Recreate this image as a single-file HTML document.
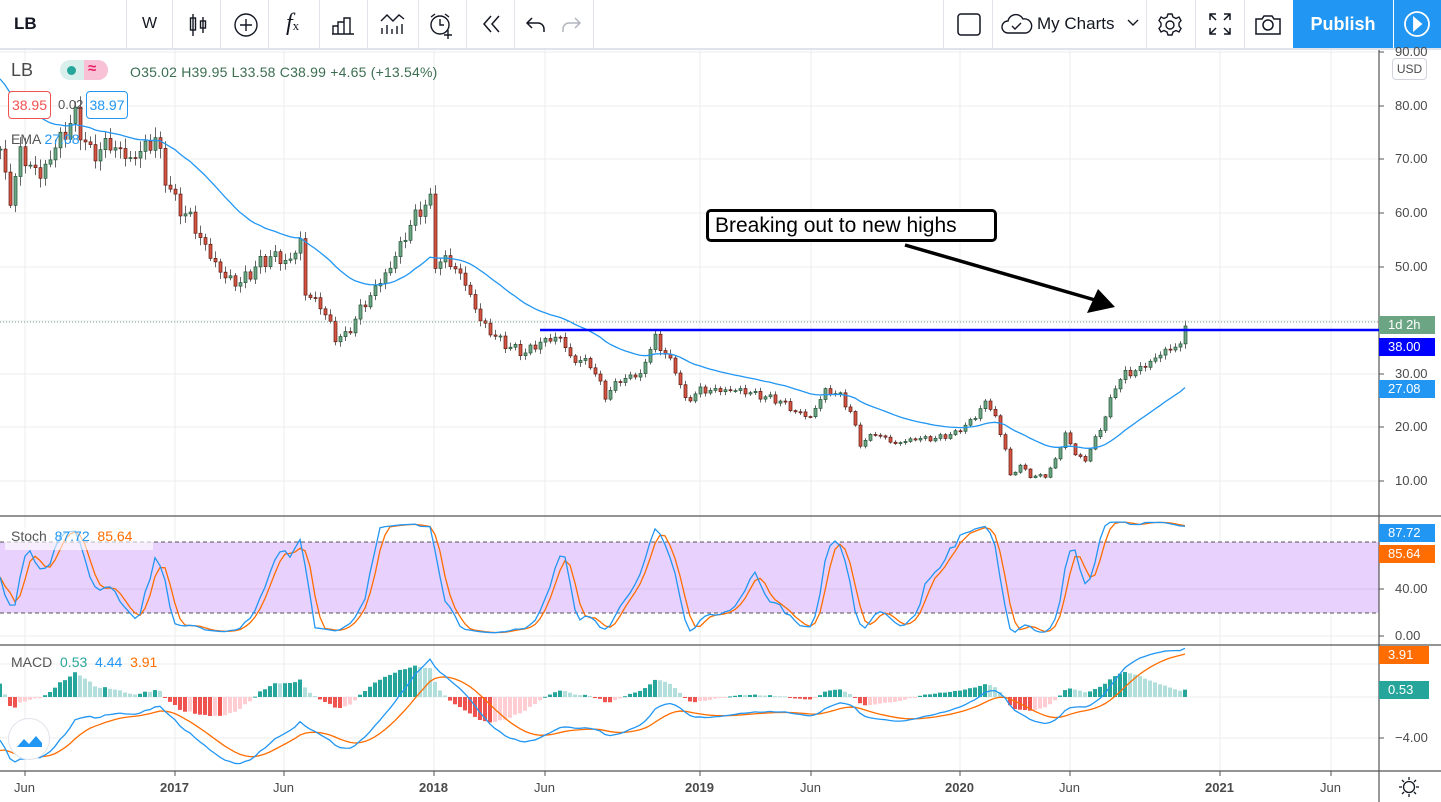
<!DOCTYPE html>
<html><head><meta charset="utf-8">
<style>
*{margin:0;padding:0;box-sizing:border-box}
body{width:1441px;height:802px;overflow:hidden;background:#fff;font-family:"Liberation Sans",sans-serif;position:relative}
#tb{position:absolute;left:0;top:0;width:1441px;height:50px;border-bottom:2px solid #e0e3eb;background:#fff}
.sep{position:absolute;top:0;width:1px;height:48px;background:#e0e3eb}
.ic{position:absolute;top:12px}
#pub{position:absolute;left:1293px;top:0;width:100px;height:48px;background:#2196f3;color:#fff;font-size:18px;font-weight:bold;text-align:center;line-height:48px}
#play{position:absolute;left:1394px;top:0;width:47px;height:48px;background:#2196f3}
.lbl{position:absolute;left:1379px;width:56px;height:18px;color:#fff;font-size:13px;line-height:18px;padding-left:9px}
.ax{position:absolute;left:1395px;font-size:13px;color:#4a4a4a}
.tx{position:absolute;top:780px;font-size:13px;color:#4a4a4a}
</style></head><body>
<div id="tb">
<div style="position:absolute;left:14px;top:14px;font-size:17px;font-weight:bold;color:#131722">LB</div>
<div class="sep" style="left:126px"></div>
<div style="position:absolute;left:142px;top:15px;font-size:16px;color:#131722">W</div>
<div class="sep" style="left:172px"></div>
<svg class="ic" style="left:186px" width="24" height="26" viewBox="0 0 24 26" fill="none" stroke="#131722" stroke-width="1.4"><path d="M7 2v22M17 5v16"/><rect x="4.5" y="6" width="5" height="12"/><rect x="14.5" y="9" width="5" height="7"/></svg>
<div class="sep" style="left:220px"></div>
<svg class="ic" style="left:233px" width="26" height="26" fill="none" stroke="#131722" stroke-width="1.4"><circle cx="13" cy="13" r="11"/><path d="M13 7v12M7 13h12"/></svg>
<div class="sep" style="left:268px"></div>
<div style="position:absolute;left:286px;top:10px;font-size:24px;font-family:'Liberation Serif',serif;font-style:italic;color:#131722">f<span style="font-size:13px;font-style:normal">x</span></div>
<div class="sep" style="left:319px"></div>
<svg class="ic" style="left:331px" width="24" height="24" fill="none" stroke="#131722" stroke-width="1.4"><path d="M1 22h22M2 22v-8h5v8M7 22v-12h6v12M13 22v-16h6v16"/></svg>
<div class="sep" style="left:367px"></div>
<svg class="ic" style="left:380px" width="26" height="24" fill="none" stroke="#131722" stroke-width="1.4"><path d="M1 9l6-6 6 6 6-6 5 4M2 22v-6M7 22v-9M12 22v-5M17 22v-8M22 22v-10"/></svg>
<div class="sep" style="left:418px"></div>
<svg class="ic" style="left:428px" width="28" height="28" fill="none" stroke="#131722" stroke-width="1.4"><circle cx="12" cy="13" r="9"/><path d="M12 7v6h4M3 5l4-3M21 5l-4-3M20 18v9M16 23h8"/></svg>
<div class="sep" style="left:466px"></div>
<svg class="ic" style="left:479px" width="24" height="24" fill="none" stroke="#131722" stroke-width="1.5"><path d="M12 4l-7 8 7 8M20 4l-7 8 7 8"/></svg>
<div class="sep" style="left:514px"></div>
<svg class="ic" style="left:525px" width="22" height="24" fill="none" stroke="#131722" stroke-width="1.5"><path d="M7 6l-5 5 5 5M2 11h11a6 6 0 0 1 6 6v3"/></svg>
<svg class="ic" style="left:560px" width="22" height="24" fill="none" stroke="#b2b5be" stroke-width="1.5"><path d="M15 6l5 5-5 5M20 11h-11a6 6 0 0 0-6 6v3"/></svg>
<div class="sep" style="left:593px"></div>
<div class="sep" style="left:943px"></div>
<svg class="ic" style="left:957px" width="24" height="24" fill="none" stroke="#131722" stroke-width="1.5"><rect x="1" y="2" width="22" height="21" rx="3"/></svg>
<div class="sep" style="left:992px"></div>
<svg class="ic" style="left:1001px;top:13px" width="32" height="22" fill="none" stroke="#131722" stroke-width="1.4"><path d="M7 20a6 6 0 0 1 0-12 8 8 0 0 1 15-2 7 7 0 0 1 3 14z"/><path d="M11 13l3 3 6-6"/></svg>
<div style="position:absolute;left:1037px;top:14px;font-size:17px;color:#131722">My Charts</div>
<svg class="ic" style="left:1127px;top:18px" width="12" height="10" fill="none" stroke="#131722" stroke-width="1.4"><path d="M1 2l5 5 5-5"/></svg>
<div class="sep" style="left:1146px"></div>
<svg class="ic" style="left:1157px" width="26" height="26" fill="none" stroke="#131722" stroke-width="1.4"><circle cx="13" cy="13" r="4"/><path d="M11 2h4l1 3 3 1.5 3-1.5 2 3.5-2 2.5v3l2 2.5-2 3.5-3-1.5-3 1.5-1 3h-4l-1-3-3-1.5-3 1.5-2-3.5 2-2.5v-3l-2-2.5 2-3.5 3 1.5 3-1.5z"/></svg>
<div class="sep" style="left:1195px"></div>
<svg class="ic" style="left:1208px" width="24" height="24" fill="none" stroke="#131722" stroke-width="1.5"><path d="M2 8V2h6M2 2l6 6M16 2h6v6M22 2l-6 6M2 16v6h6M2 22l6-6M22 16v6h-6M22 22l-6-6"/></svg>
<div class="sep" style="left:1244px"></div>
<svg class="ic" style="left:1254px" width="28" height="24" fill="none" stroke="#131722" stroke-width="1.5"><path d="M2 7h6l2-3h8l2 3h6v15H2z"/><circle cx="14" cy="13" r="5"/></svg>
<div id="pub">Publish</div>
<div id="play"><svg style="position:absolute;left:9px;top:10px" width="28" height="28" fill="none" stroke="#fff" stroke-width="1.8"><circle cx="14" cy="14" r="12"/><path d="M11 8l7 6-7 6z" fill="#fff"/></svg></div>
</div>

<svg id="ch" style="position:absolute;left:0;top:50px" width="1441" height="752"></svg>

<div style="position:absolute;left:11px;top:60px;font-size:18px;color:#4a4a4a">LB</div>
<div style="position:absolute;left:60px;top:60px;width:48px;height:20px;border-radius:10px;background:#d9efec;overflow:hidden"><div style="position:absolute;left:24px;top:0;width:24px;height:20px;background:#f9c1d5"></div><div style="position:absolute;left:7px;top:6px;width:9px;height:9px;border-radius:5px;background:#26a69a"></div><div style="position:absolute;left:28px;top:0;font-size:15px;color:#e91e63;font-weight:bold">≈</div></div>
<div style="position:absolute;left:130px;top:64px;font-size:14px;color:#3c6e52;letter-spacing:.2px">O35.02 H39.95 L33.58 C38.99 +4.65 (+13.54%)</div>
<div style="position:absolute;left:8px;top:91px;width:43px;height:28px;border:1px solid #ef5350;border-radius:4px;color:#ef5350;font-size:14px;text-align:center;line-height:26px;background:#fff">38.95</div>
<div style="position:absolute;left:58px;top:97px;font-size:13px;color:#555">0.02</div>
<div style="position:absolute;left:86px;top:91px;width:42px;height:28px;border:1px solid #2196f3;border-radius:4px;color:#2196f3;font-size:14px;text-align:center;line-height:26px;background:#fff">38.97</div>
<div style="position:absolute;left:11px;top:131px;font-size:14px;color:#555">EMA <span style="color:#2196f3">27.08</span></div>
<div style="position:absolute;left:5px;top:527px;width:148px;height:23px;background:rgba(255,255,255,.6)"></div>
<div style="position:absolute;left:11px;top:528px;font-size:14px;color:#555">Stoch <span style="color:#2196f3">&nbsp;87.72</span> <span style="color:#ff6d00">&nbsp;85.64</span></div>
<div style="position:absolute;left:11px;top:654px;font-size:14px;color:#555">MACD <span style="color:#26a69a">&nbsp;0.53</span> <span style="color:#2196f3">&nbsp;4.44</span> <span style="color:#ff6d00">&nbsp;3.91</span></div>
<div style="position:absolute;left:8px;top:718px;width:42px;height:42px;border-radius:21px;background:#fff;border:1px solid #e0e3eb"><svg width="40" height="40"><path d="M8 28l7-8 5 5 7-8 6 7v4H8z" fill="#2196f3"/></svg></div>
<div style="position:absolute;left:706px;top:209px;width:291px;height:33px;border:3px solid #000;border-radius:5px;background:#fff;font-size:21px;color:#000;padding-left:6px;line-height:27px">Breaking out to new highs</div>
<div class="ax" style="top:44px">90.00</div>
<div style="position:absolute;left:1392px;top:58px;width:35px;height:22px;border:1px solid #d1d4dc;border-radius:4px;font-size:12px;color:#4a4a4a;text-align:center;line-height:20px;background:#fff">USD</div>
<div class="ax" style="top:98px">80.00</div>
<div class="ax" style="top:151px">70.00</div>
<div class="ax" style="top:205px">60.00</div>
<div class="ax" style="top:259px">50.00</div>
<div class="ax" style="top:366px">30.00</div>
<div class="ax" style="top:419px">20.00</div>
<div class="ax" style="top:473px">10.00</div>
<div class="ax" style="top:581px">40.00</div>
<div class="ax" style="top:628px">0.00</div>
<div class="ax" style="top:730px">−4.00</div>
<div class="lbl" style="top:316px;background:#6ba583">1d 2h</div>
<div class="lbl" style="top:338px;background:#0000ff">38.00</div>
<div class="lbl" style="top:380px;background:#2196f3">27.08</div>
<div class="lbl" style="top:524px;background:#2196f3">87.72</div>
<div class="lbl" style="top:545px;background:#ff6d00">85.64</div>
<div class="lbl" style="top:646px;background:#ff6d00;width:50px">3.91</div>
<div class="lbl" style="top:681px;background:#26a69a;width:50px">0.53</div>
<div class="tx" style="left:14px">Jun</div>
<div class="tx" style="left:160px;font-weight:bold">2017</div>
<div class="tx" style="left:273px">Jun</div>
<div class="tx" style="left:419px;font-weight:bold">2018</div>
<div class="tx" style="left:534px">Jun</div>
<div class="tx" style="left:685px;font-weight:bold">2019</div>
<div class="tx" style="left:800px">Jun</div>
<div class="tx" style="left:945px;font-weight:bold">2020</div>
<div class="tx" style="left:1059px">Jun</div>
<div class="tx" style="left:1205px;font-weight:bold">2021</div>
<div class="tx" style="left:1320px">Jun</div>
<svg style="position:absolute;left:1398px;top:776px" width="22" height="22" fill="none" stroke="#131722" stroke-width="1.3"><circle cx="11" cy="11" r="5.5"/><path d="M11 1v3M11 18v3M1 11h3M18 11h3M4 4l2 2M16 16l2 2M4 18l2-2M16 6l2-2"/></svg>

<script>
(function(){
var S=document.getElementById('ch'),o='',T=50;
function L(x1,y1,x2,y2,c,w,d){o+='<line x1="'+x1+'" y1="'+(y1-T)+'" x2="'+x2+'" y2="'+(y2-T)+'" stroke="'+c+'" stroke-width="'+(w||1)+'"'+(d?' stroke-dasharray="'+d+'"':'')+'/>';}
function R(x,y,w,h,c,s){o+='<rect x="'+x+'" y="'+(y-T)+'" width="'+w+'" height="'+h+'" fill="'+c+'"'+(s?' stroke="'+s+'" stroke-width="0.7"':'')+'/>';}
function P(pts,c,w){o+='<polyline fill="none" stroke="'+c+'" stroke-width="'+(w||1.3)+'" points="'+pts.map(function(p){return p[0]+','+(p[1]-T)}).join(' ')+'"/>';}
var vx=[25,175,284,434,545,700,811,960,1070,1220,1331];
vx.forEach(function(x){L(x,50,x,771,'#ececee',1)});
[52,106,159,213,267,321,374,427,481].forEach(function(y){L(0,y,1379,y,'#ececee',1)});
L(0,589,1379,589,'#ececee');L(0,697,1379,697,'#ececee');L(0,738,1379,738,'#ececee');L(0,664,1379,664,'#ececee');L(0,636,1379,636,'#ececee');
R(0,542,1379,71,'#e8d1fc');
L(0,542,1379,542,'#555',1,'4,3');L(0,613,1379,613,'#555',1,'4,3');L(0,589,1379,589,'#d6bff0');
L(0,516,1441,516,'#555',1.2);L(0,645,1441,645,'#555',1.2);L(0,771,1441,771,'#555',1.2);
L(1379,50,1379,802,'#555',1.2);
[52,106,159,213,267,321,374,427,481,589,636,738,533,553,655,689,325,347,389].forEach(function(y){L(1379,y,1384,y,'#555')});
vx.forEach(function(x){L(x,771,x,776,'#555')});
var K=[[0,72],[5,66],[10,63],[20,71],[40,67],[60,74],[75,78],[90,71],[110,73],[130,70],[155,74],[165,67],[175,62],[190,59],[210,52],[225,48],[240,47],[255,50],[270,52],[290,51],[300,55],[305,45],[320,43],[335,37],[345,37],[360,42],[375,46],[390,50],[405,56],[420,61],[430,62],[435,51],[450,51],[465,47],[480,40],[495,37],[510,35],[525,34],[540,36],[560,37],[570,33],[590,32],[605,26],[620,29],[640,30],[655,37],[660,35],[675,31],[685,25],[700,27],[720,27],[740,27],[760,26],[780,25],[795,23],[810,22],[825,27],[840,26],[850,23],[860,17],[875,19],[895,17],[915,18],[935,18],[955,19],[975,22],[985,25],[995,22],[1005,16],[1010,11],[1020,13],[1030,11],[1045,11],[1055,14],[1065,19],[1075,15],[1085,14],[1095,18],[1105,22],[1115,28],[1125,30],[1140,31],[1155,33],[1170,35],[1180,35],[1185,39]];
function interp(x){for(var i=1;i<K.length;i++){if(x<=K[i][0]){var a=K[i-1],b=K[i];return a[1]+(b[1]-a[1])*(x-a[0])/(b[0]-a[0]);}}return 39;}
function Y(p){return 535-5.36*p}
var C=[],X=[],prev=interp(0);
for(var x=0;x<=1185;x+=5){var c=interp(x)*(1+0.018*Math.sin(x*1.7)+0.012*Math.sin(x*0.37));if(x==1185)c=38.99;
var op=prev;var hi=Math.max(op,c)*(1+0.008+0.018*Math.abs(Math.sin(x*2.3)));var lo=Math.min(op,c)*(1-0.008-0.018*Math.abs(Math.cos(x*1.1)));
var up=c>=op;L(x+0.5,Y(hi),x+0.5,Y(lo),'#666',1);
var yt=Y(Math.max(op,c)),h=Math.max(1,Y(Math.min(op,c))-yt);
R(x-1,yt,3,h,up?'#6ba583':'#d75442',up?'#225437':'#5b1a13');
C.push(c);X.push(x);prev=c;}
var e=86,al=2/31,ep=[];for(var i=0;i<C.length;i++){e=e+al*(C[i]-e);ep.push([X[i],Y(e)]);}
P(ep,'#2196f3',1.3);
L(540,330,1379,330,'#0000ff',2.5);
L(0,322,1379,322,'#6ba583',1,'1,2');
var rk=[];for(var i=0;i<C.length;i++){var a=Math.max(0,i-13),mx=-1e9,mn=1e9;for(var j=a;j<=i;j++){mx=Math.max(mx,C[j]*1.02);mn=Math.min(mn,C[j]*0.98);}rk.push(100*(C[i]-mn)/(mx-mn||1));}
var k=[],d=[];for(var i=0;i<rk.length;i++){var s=0,n=0;for(var j=Math.max(0,i-2);j<=i;j++){s+=rk[j];n++}k.push(s/n);}
for(var i=0;i<k.length;i++){var s=0,n=0;for(var j=Math.max(0,i-2);j<=i;j++){s+=k[j];n++}d.push(s/n);}
function SY(v){return 636-1.18*v}
P(d.map(function(v,i){return[X[i],SY(v)]}),'#ff6d00',1.3);
P(k.map(function(v,i){return[X[i],SY(v)]}),'#2196f3',1.3);
var e12=C[0]*1.15,e26=C[0]*1.2,m=[],sg=[],s9;
for(var i=0;i<C.length;i++){e12+=2/13*(C[i]-e12);e26+=2/27*(C[i]-e26);m.push(e12-e26);s9=(i==0)?m[0]-1:s9+0.2*(m[i]-s9);sg.push(s9);}
function MY(v){return 697-10.3*v}
var ph=0;for(var i=0;i<m.length;i++){var h=m[i]-sg[i];var col=h>=0?(h>=ph?'#26a69a':'#b2dfdb'):(h<ph?'#ef5350':'#ffcdd2');var y0=MY(0),y1=MY(h*1.3);R(X[i]-2,Math.min(y0,y1),4,Math.max(1,Math.abs(y1-y0)),col);ph=h;}
P(sg.map(function(v,i){return[X[i],MY(v)]}),'#ff6d00',1.3);
P(m.map(function(v,i){return[X[i],MY(v)]}),'#2196f3',1.3);
o+='<line x1="905" y1="'+(245-T)+'" x2="1095" y2="'+(300-T)+'" stroke="#000" stroke-width="3.5"/>';
o+='<polygon points="1115,'+(307-T)+' 1087,'+(313-T)+' 1098,'+(289-T)+'" fill="#000"/>';
S.innerHTML=o;
})();
</script>
</body></html>
